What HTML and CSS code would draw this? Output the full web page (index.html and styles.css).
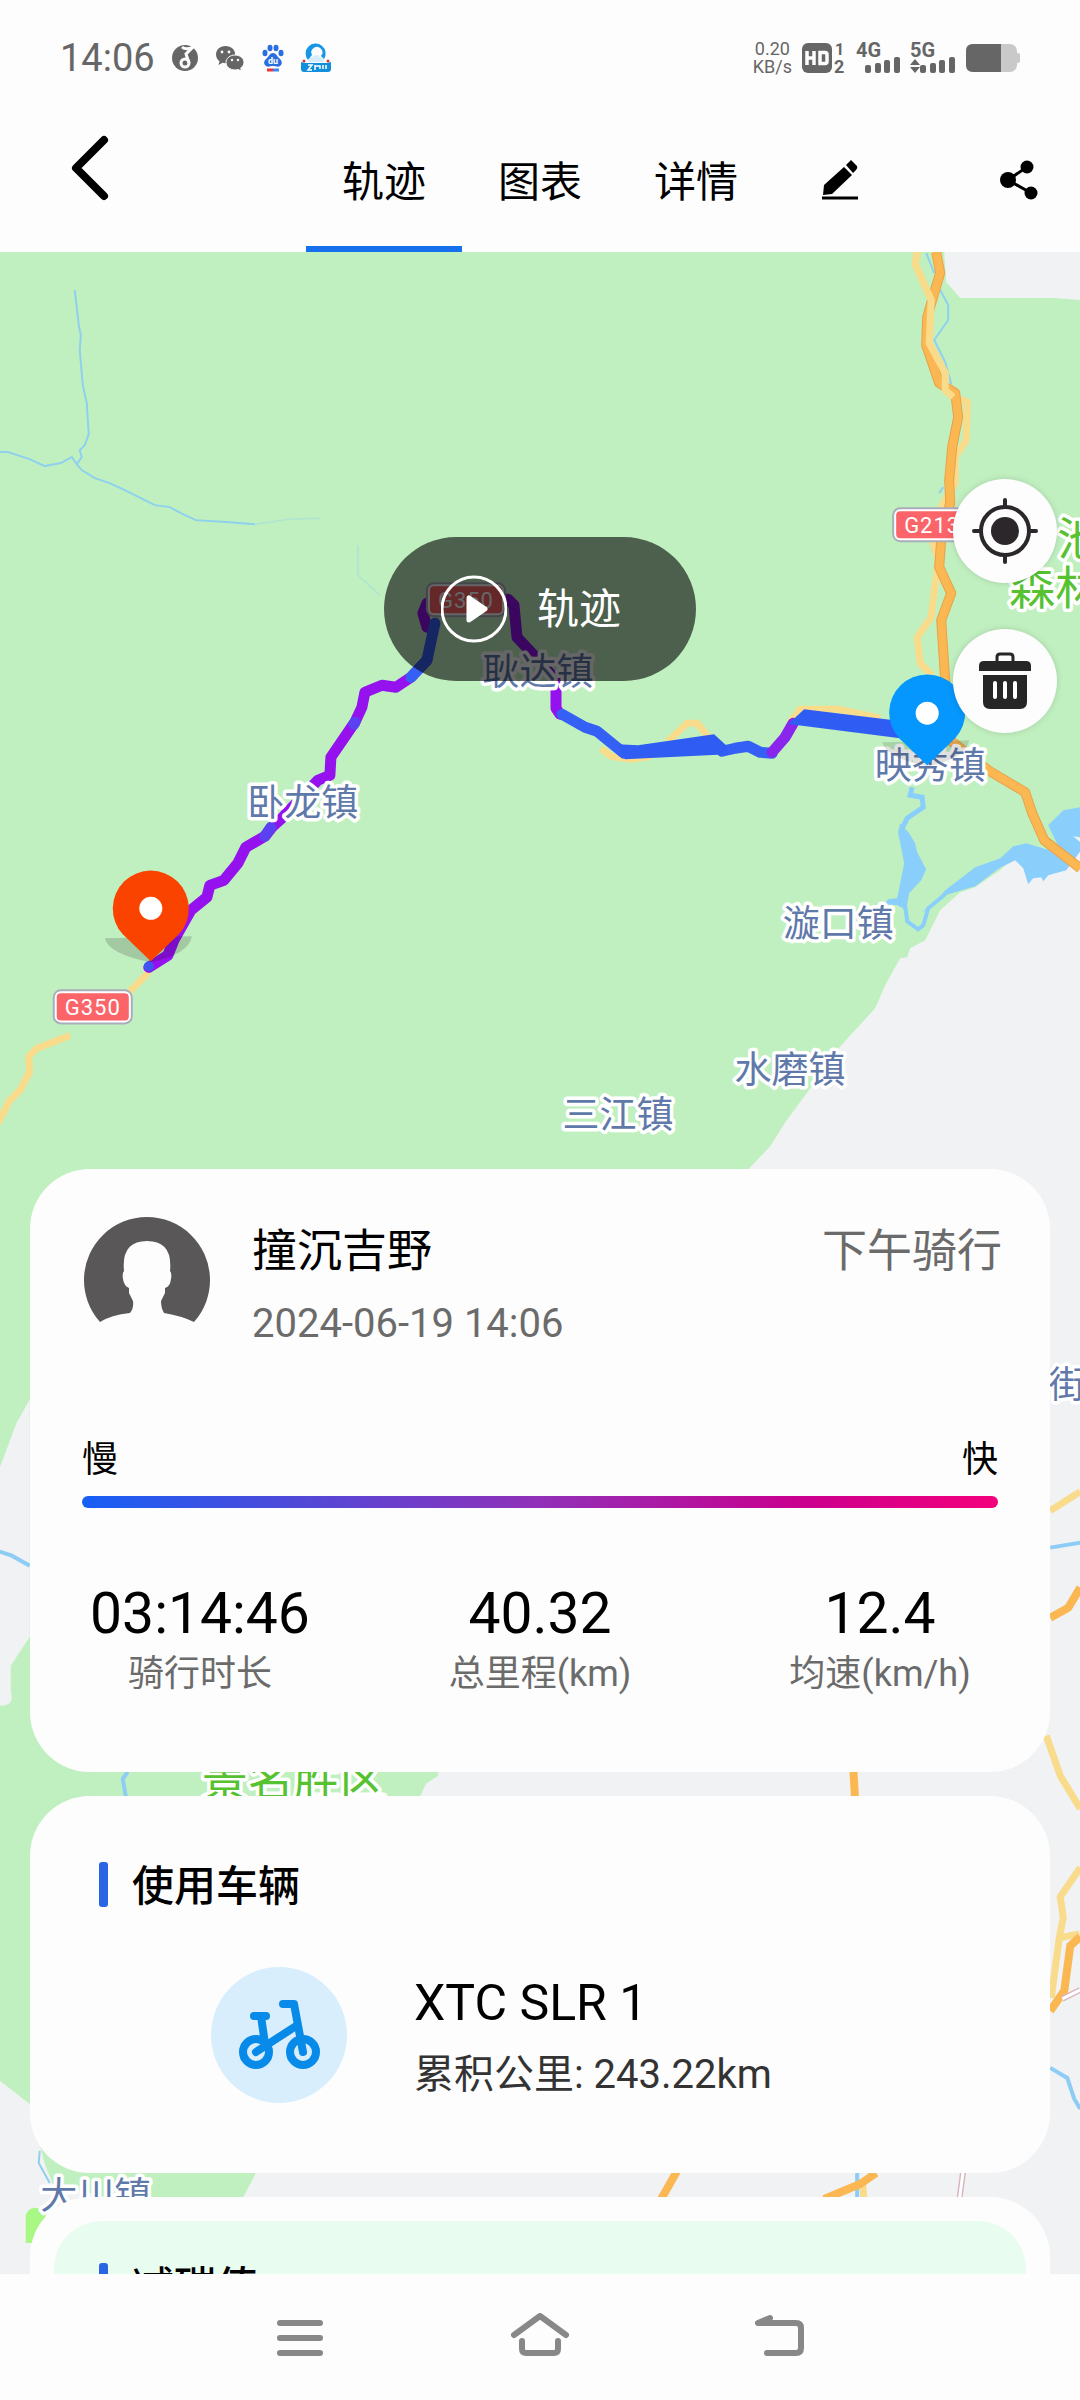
FILE: index.html
```
<!DOCTYPE html>
<html lang="zh-CN">
<head>
  <meta charset="UTF-8" />
  <meta name="viewport" content="width=device-width, initial-scale=1.0"/>
  <title>轨迹</title>
  <link rel="stylesheet" href="styles.css">
</head>
<body>
  <div class="status">
    <div class="status-left">
      <span class="clock">14:06</span>
      <svg width="26" height="28" viewBox="0 0 26 28">
        <circle cx="13" cy="14" r="13" fill="#666"/>
        <path d="M10 3q3 3 10 1l-6 6 3 9" fill="none" stroke="#fdfdfd" stroke-width="3"/>
        <circle cx="13" cy="19" r="4" fill="none" stroke="#fdfdfd" stroke-width="3"/>
      </svg>
      <svg width="30" height="26" viewBox="0 0 30 26">
        <path d="M10.500 1C4.700 1 1 5 1 9.500c0 3 1.500 5.200 3.500 6.700L3.500 20l4-2.200c1 .3 2 .4 3 .4 5.800 0 9.700-4 9.700-8.600S16.300 1 10.500 1z" fill="#666"/>
        <path d="M20 10c-5 0-9 3.200-9 7.500s4 7.500 9 7.500c1 0 2-.2 3-.5l3.500 1.500-.8-3c2-1.300 3.300-3.300 3.300-5.500 0-4.300-4-7.500-9-7.500z" fill="#666" stroke="#fdfdfd"/>
        <g fill="#fdfdfd">
          <circle cx="7" cy="7" r="1.400"/><circle cx="14" cy="7" r="1.400"/>
          <circle cx="17" cy="15" r="1.200"/><circle cx="23" cy="15" r="1.200"/>
        </g>
      </svg>
      <svg width="22" height="28" viewBox="0 0 22 28">
        <g fill="#2a6fe0">
          <ellipse cx="3" cy="9" rx="2.500" ry="3.200"/>
          <ellipse cx="8" cy="4" rx="2.500" ry="3.200"/>
          <ellipse cx="14" cy="4" rx="2.500" ry="3.200"/>
          <ellipse cx="19" cy="9" rx="2.500" ry="3.200"/>
          <path d="M11 9c-3 0-4 3-6 5s-4 4-2 7c2 3 5 1 8 1s6 2 8-1c2-3 0-5-2-7s-3-5-6-5z"/>
        </g>
        <text x="11" y="20" font-size="9" font-weight="700" fill="#fff" text-anchor="middle">du</text>
        <path d="M5 26h6" stroke="#e33" stroke-width="3"/>
        <path d="M11 26h6" stroke="#3b86f0" stroke-width="3"/>
      </svg>
      <svg width="30" height="30" viewBox="0 0 30 30">
        <path d="M7 17a10 10 0 1 1 16-1l-3-3a5.500 5.500 0 1 0-9-1z" fill="#1596e6"/>
        <path d="M7 19q0-4 4-5 4-4 8 0 4 1 4 5z" fill="#d6ecfa"/>
        <path d="M0 19l4 1h22l4-1v7q0 3-3 3H3q-3 0-3-3z" fill="#118fdc"/>
        <path d="M7 22h4l-4 5h4M14 22v5M14 23h5v3M22 22v4M25 22v4" fill="none" stroke="#fff" stroke-width="1.500"/>
        <circle cx="3" cy="18" r="1.500" fill="#d33"/><circle cx="27" cy="18" r="1.500" fill="#d33"/>
      </svg>
    </div>
    <div class="status-right">
      <div class="speed"><span>0.20</span><span>KB/s</span></div>
      <svg width="44" height="32" viewBox="0 0 44 32" fill="#666">
        <rect y="1" width="30" height="30" rx="6"/>
        <path d="M5 9v14M12 9v14M5 16h7M18 10.500h5q2 0 2 2v7q0 2-2 2h-5z" fill="none" stroke="#fdfdfd" stroke-width="3.500"/>
        <text x="33" y="13" font-size="16" font-weight="700">1</text>
        <text x="32" y="31" font-size="18" font-weight="700">2</text>
      </svg>
      <svg width="44" height="32" viewBox="0 0 44 32" fill="#666">
        <text x="0" y="15" font-size="20" font-weight="700">4G</text>
        <rect x="9" y="23" width="6" height="8" rx="2"/><rect x="19" y="21" width="6" height="10" rx="2"/>
        <rect x="28" y="18" width="6" height="13" rx="2"/><rect x="38" y="15" width="6" height="16" rx="2"/>
      </svg>
      <svg width="46" height="32" viewBox="0 0 46 32" fill="#666">
        <text x="0" y="15" font-size="20" font-weight="700">5G</text>
        <path d="M0 23l5-6 5 6zM0 25h10l-5 6z"/>
        <rect x="10" y="23" width="6" height="8" rx="2"/><rect x="20" y="21" width="6" height="10" rx="2"/>
        <rect x="29" y="18" width="6" height="13" rx="2"/><rect x="39" y="15" width="6" height="16" rx="2"/>
      </svg>
      <svg width="54" height="28" viewBox="0 0 54 28">
        <rect width="51" height="28" rx="7" fill="#c9c9c9"/>
        <rect x="50" y="9" width="4" height="10" rx="2" fill="#c9c9c9"/>
        <path d="M7 0h28v28H7q-7 0-7-7V7q0-7 7-7z" fill="#666"/>
      </svg>
    </div>
  </div>

  <header class="topbar">
    <button class="back" aria-label="返回">
      <svg width="38" height="66" viewBox="0 0 38 66"><path d="M33 5L5 33l28 28" fill="none" stroke="#000" stroke-width="8" stroke-linecap="round" stroke-linejoin="round"/></svg>
    </button>
    <nav class="tabs">
      <button class="tab active">轨迹</button>
      <button class="tab">图表</button>
      <button class="tab">详情</button>
    </nav>
    <button class="edit" aria-label="编辑">
      <svg width="36" height="40" viewBox="0 0 36 40">
        <path d="M1 35l1-10L22 7l8 8L10 34zM24 5l5-5 6 6q1 2-1 4l-3 3z"/>
        <path d="M0 38h36" stroke="#000" stroke-width="3"/>
      </svg>
    </button>
    <button class="share" aria-label="分享">
      <svg width="38" height="40" viewBox="0 0 38 40">
        <path d="M27 7L8 20l23 13" fill="none" stroke="#000" stroke-width="3"/>
        <circle cx="27" cy="7" r="6.500"/><circle cx="8" cy="20" r="8"/><circle cx="31" cy="33" r="6.500"/>
      </svg>
    </button>
  </header>

  <main class="page">
    <svg class="map" viewBox="0 252 1080 2021" preserveAspectRatio="xMidYMin slice">
      <rect y="252" width="1080" height="2021" fill="#c1f0c0"/>
      <!-- land outside the park -->
      <g fill="#f1f2f4">
        <path d="M944 252l2 30 14 16h95l25 2v-48z"/>
        <path d="M1080 845l-65 10-15 15-25 17-15 5-20 18-10 20-5 10-15 8-3 9-7 1-15 27-10 23-35 38-30 42-25 34-15 24-22 23L430 1500l10 263-2 12-12 8-6 13-120 150-45 228-12 23v76h837z"/>
        <path d="M30 1399l-13 23-17 45v238q12 0 12-8l-1-8v-24l19-29z"/>
        <path d="M0 2080l30 23 15 60 8 20 60 15v75H0z"/>
      </g>
      <path d="M26 2242v-28q2-6 8-7h14l-8 35z" fill="#a8f883"/>
      <!-- water -->
      <g fill="none" stroke="#8fd0ee" stroke-width="2">
        <path d="M75 290l4 35 2 10-1 15 3 35 4 18 1 17 1 14-4 11-5 5 2 7-5 7-5-7-11 6-16 3-15-7-22-7H0"/>
        <path d="M77 464l5 6 13 8 15 5 15 7 30 15 15 2 13 7 13 6 34 2 25 2"/>
        <path d="M255 524l35-5 30-1M358 545v30l22 20" opacity=".3"/>
        <path d="M926 253l8 20M940 290l8 15v15l-14 20 11 22 6 22M943 487l-4 6M931 545l2 8M40 2150l-1 12 11 20"/>
        <path d="M0 1551l12 4 18 10M1050 1547l30-5M1050 2067l17 10 7 21 6 10M128 1771l-5 7 3 18M857 2170v30" stroke-width="4" stroke="#8dcdf5"/>
      </g>
      <g fill="#8acffc">
        <path d="M900 823l9 10 6 10 2 9 9 17-5 11-12 13-4 22-2-7-6-3-13-1 4-5 9-1 7-35-6-30z"/>
        <path d="M930 908l15-18 30-23 25-9 13-12 13-3 20 6 14 1-12-25 15-15 17-3v44l-14 19-18 5-5 6-2-4-8 1-5 6-5-16-8-8-16 8-24 18-30 9-24 17z"/>
        <path d="M912 787l-2 8 12 2 1 10-16 11-7 14" fill="none" stroke="#8acffc" stroke-width="5"/>
        <path d="M905 905l2 16 11 8 5-4 5-17 17-14" fill="none" stroke="#8acffc" stroke-width="4"/>
      </g>
      <path d="M1073 836l7 1v5z" fill="#f1f2f4"/>
      <!-- roads -->
      <g fill="none" stroke-linejoin="round">
        <path class="road-minor" d="M917 252l-2 12 16 36-2 43 16 30v17l8 7 14 5-1 38-11 17v26l-14 24-9 33 6 20-7 57-14 20 3 26 12 12"/>
        <path class="road-minor" d="M149 972l-12 12-14 14-12 20M70 1035l-33 13-8 8 1 15-9 18-11 11-12 23M667 742l20-19h10l14 17M790 722l10-13h38l42 9M601 748l10 8 20 3 20-3"/>
        <path class="road-minor" d="M1050 1510l30-19M1046 1735l14 40 20 33M1080 1867l-20 29 3 21-4 20-8 60M1059 1937l20-4M862 2178l2 22"/>
        <path class="road-edge" d="M936 252l4 21-6 20-7 24-1 28 13 38 16 10 3 24-6 30-3 33 1 23-9 37-2 27 12 26-10 27 4 60 5 60 38 30 37 22 7 21 12 27 36 28"/>
        <path class="road" d="M936 252l4 21-6 20-7 24-1 28 13 38 16 10 3 24-6 30-3 33 1 23-9 37-2 27 12 26-10 27 4 60 5 60 38 30 37 22 7 21 12 27 36 28"/>
        <path class="road-minor" d="M917 252l-2 12 16 36-2 43 16 30v17l8 7"/>
        <path class="road" d="M1050 1617l18-10 12-20M1080 1936l-10 9-6 45-14 20M853 1765l2 35M677 2170l-17 30M876 2172l-16 11-36 15"/>
        <path d="M1062 1998l18-9M963 2170l-4 30" stroke="#d9b6bd" stroke-width="6"/>
        <path d="M1062 1998l18-9M963 2170l-4 30" stroke="#fff" stroke-width="3"/>
      </g>
      <!-- ride -->
      <g fill="none" stroke-width="11" stroke-linejoin="round" stroke-linecap="round">
        <path stroke="#9511ee" d="M149 967l19-12 6-15 17-30 16-13 3-12 14-5 14-17 8-16 19-11 7-9 10-9 36-38 12-5 1-18 24-35 7-15 3-15 17-7 14 2 15-10 16-17M427 627l-4-14 4-10 12-4h69l6 6 3 32 17 18 22 25v28l4 6"/>
        <path stroke="#3560f5" d="M411 677l16-17 8-37M562 714l23 13 12 4 27 22M722 751l13-3 13-2 12 6 12 1"/>
        <path stroke="#5a42f2" d="M265 836l6-9M354 724l1-2"/>
        <path stroke="#8a25ee" d="M772 752l13-15 8-14"/>
      </g>
      <path d="M618 744l20 1 76-11 12 11 2 9-103 5zM788 724l16-15 90 11 6 18-102-13z" fill="#2f5df4"/>
      <circle cx="149" cy="966" r="5" fill="#3f55f3"/>
      <!-- road shields -->
      <g class="shield">
        <rect x="54" y="990" width="78" height="33" rx="7"/><rect class="plate" x="57" y="993" width="72" height="27" rx="4"/>
        <text x="93" y="1015">G350</text>
        <rect x="893" y="508" width="78" height="33" rx="7"/><rect class="plate" x="896" y="511" width="72" height="27" rx="4"/>
        <text x="932" y="533">G213</text>
        <rect x="427" y="583" width="78" height="33" rx="7"/><rect class="plate" x="430" y="586" width="72" height="27" rx="4"/>
        <text x="466" y="608">G350</text>
      </g>
      <!-- place names -->
      <g class="place">
        <text x="303" y="816">卧龙镇</text>
        <text x="538" y="685">耿达镇</text>
        <text x="930" y="779">映秀镇</text>
        <text x="838" y="937">漩口镇</text>
        <text x="790" y="1083">水磨镇</text>
        <text x="618" y="1128">三江镇</text>
        <text x="1067" y="1397">街</text>
        <text x="96" y="2208">大川镇</text>
      </g>
      <g class="park">
        <text x="1057" y="555">池</text>
        <text x="1009" y="604">森林</text>
        <text x="202" y="1795">景名胜区</text>
      </g>
      <!-- start and end pins -->
      <g>
        <path d="M105 938q4 16 46 24 38-8 41-26z" fill="#000" opacity=".16"/>
        <path d="M151 961l-28-27a38 38 0 1 1 56 0z" fill="#fb4300"/>
        <circle cx="151" cy="908" r="11.500" fill="#fff"/>
      </g>
      <g>
        <path d="M882 742q4 16 46 24 38-8 41-26z" fill="#000" opacity=".12"/>
        <path d="M927 765l-28-27a38 38 0 1 1 56 0z" fill="#0597fd"/>
        <circle cx="927" cy="713" r="11.500" fill="#fff"/>
      </g>
    </svg>

    <button class="replay">
      <svg width="66" height="68" viewBox="0 0 66 68">
        <circle cx="33" cy="34" r="32" fill="none" stroke="#fff" stroke-width="3"/>
        <path d="M28 23v22l16-11z" fill="#fff" stroke="#fff" stroke-width="5" stroke-linejoin="round"/>
      </svg>
      <span>轨迹</span>
    </button>
    <div class="map-tools">
      <button class="tool" aria-label="定位">
        <svg width="66" height="66" viewBox="0 0 66 66">
          <circle cx="33" cy="33" r="14" fill="#2b272b"/>
          <circle cx="33" cy="33" r="24" fill="none" stroke="#2b272b" stroke-width="4"/>
          <path d="M33 2v7M33 57v7M2 33h7M57 33h7" stroke="#2b272b" stroke-width="4" stroke-linecap="round"/>
        </svg>
      </button>
      <button class="tool" aria-label="删除">
        <svg width="52" height="58" viewBox="0 0 52 58" fill="#262626">
          <path d="M18 9V5q0-3 3-3h10q3 0 3 3v4" fill="none" stroke="#262626" stroke-width="3"/>
          <path d="M5 9h42q5 0 5 5v5H0v-5q0-5 5-5z"/>
          <path d="M4 23h44v27q0 7-7 7H11q-7 0-7-7z"/>
          <path d="M16 31v14M26 31v14M36 31v14" stroke="#fff" stroke-width="4" stroke-linecap="round"/>
        </svg>
      </button>
    </div>

    <div class="sheet">
      <section class="card ride">
        <div class="rider">
          <svg width="126" height="106" viewBox="0 0 126 106">
            <path d="M16 101A63 63 0 1 1 110 101Q98 95 80 92Q77 87 77 80L81 72V67Q86 66 87 58Q88 52 86 50Q89 20 63 20Q37 20 40 50Q38 52 39 58Q40 65 45 67V72L49 80Q50 87 46 92Q27 94 16 101z" fill="#595757" transform="translate(0 4)"/>
          </svg>
          <div class="rider-text">
            <h2>撞沉吉野</h2>
            <time>2024-06-19 14:06</time>
          </div>
          <span class="ride-name">下午骑行</span>
        </div>
        <div class="scale">
          <div class="scale-labels"><span>慢</span><span>快</span></div>
          <div class="scale-bar"></div>
        </div>
        <ul class="stats">
          <li><b>03:14:46</b><span>骑行时长</span></li>
          <li><b>40.32</b><span>总里程(km)</span></li>
          <li><b>12.4</b><span>均速(km/h)</span></li>
        </ul>
      </section>

      <section class="card bike">
        <h3>使用车辆</h3>
        <div class="bike-row">
          <div class="bike-icon">
            <svg width="84" height="72" viewBox="0 0 84 72" fill="none" stroke="#078ae8" stroke-width="8" stroke-linecap="round" stroke-linejoin="round">
              <circle cx="19" cy="53" r="13"/><circle cx="66" cy="53" r="13"/>
              <path d="M66 53L57 5H46M17 17h12M24 17l4 28M19 53l40-26"/>
            </svg>
          </div>
          <div class="bike-text">
            <p class="bike-name">XTC SLR 1</p>
            <p class="bike-total">累积公里: 243.22km</p>
          </div>
        </div>
      </section>

      <section class="card carbon">
        <div class="carbon-inner">
          <h3>减碳值</h3>
        </div>
      </section>
    </div>
  </main>

  <footer class="navbar">
    <button aria-label="菜单">
      <svg width="56" height="48" viewBox="0 0 56 48"><path d="M8 10h40M8 25h40M8 40h40"/></svg>
    </button>
    <button aria-label="主页">
      <svg width="60" height="48" viewBox="0 0 60 48"><path d="M4 22L30 3l26 19M12 28v8q0 4 4 4h28q4 0 4-4v-8"/></svg>
    </button>
    <button aria-label="后退">
      <svg width="56" height="48" viewBox="0 0 56 48"><path d="M18 5L6 10h38q5 0 5 5v20q0 5-5 5H15"/></svg>
    </button>
  </footer>
</body>
</html>
```
FILE: styles.css
```
* {
  margin: 0;
  padding: 0;
  box-sizing: border-box;
}

body {
  font-family: Roboto, "Noto Sans CJK SC", sans-serif;
  background: #fdfdfd;
  color: #000;
  height: 100vh;
  display: flex;
  flex-direction: column;
  overflow: hidden;
}

button {
  border: 0;
  background: transparent;
  font: inherit;
  color: inherit;
  cursor: pointer;
}

svg {
  display: block;
  flex-shrink: 0;
}

/* status bar */
.status {
  height: 116px;
  flex-shrink: 0;
  display: flex;
  align-items: center;
  justify-content: space-between;
  padding: 0 60px;
  color: #666;
}

.status svg {
  overflow: visible;
}

.status-left,
.status-right {
  display: flex;
  align-items: center;
}

.status-left {
  gap: 17px;
}

.status-right {
  gap: 10px;
}

.clock {
  font-size: 38px;
}

.speed {
  display: flex;
  flex-direction: column;
  align-items: center;
  font-size: 18px;
  line-height: 18px;
}

/* top bar */
.topbar {
  height: 136px;
  flex-shrink: 0;
  display: flex;
  align-items: stretch;
}

.back {
  width: 306px;
  padding: 0 0 32px 71px;
}

.tabs {
  display: flex;
}

.tab {
  width: 156px;
  padding-bottom: 6px;
  font-size: 42px;
  border-bottom: 6px solid transparent;
}

.tab.active {
  border-color: #1670ec;
}

.edit {
  padding: 0 48px 8px;
}

.share {
  margin-left: auto;
  padding: 0 42px 8px;
}

/* map */
.page {
  flex: 1;
  min-height: 0;
  position: relative;
  overflow: hidden;
}

.map {
  position: absolute;
  top: 0;
  left: 0;
  width: 100%;
  height: 100%;
}

.road {
  stroke: #fbb752;
  stroke-width: 8;
}

.road-edge {
  stroke: #e8a24a;
  stroke-width: 10;
}

.road-minor {
  stroke: #f8dc8c;
  stroke-width: 7;
}

.shield rect {
  fill: #fff;
  stroke: #a9adbc;
  stroke-width: 2;
}

.shield .plate {
  fill: #fb6468;
  stroke: none;
}

.shield text {
  fill: #fff;
  font-size: 22px;
  letter-spacing: 1px;
  text-anchor: middle;
}

.place text,
.park text {
  stroke: #fff;
  stroke-width: 7;
  stroke-linejoin: round;
  paint-order: stroke;
}

.place text {
  font-size: 37px;
  fill: #5f79aa;
  text-anchor: middle;
}

.park text {
  font-size: 46px;
  fill: #56c22f;
}

.replay {
  position: absolute;
  top: 285px;
  left: 50%;
  transform: translateX(-50%);
  width: 312px;
  height: 144px;
  padding-right: 18px;
  border-radius: 72px;
  background: rgba(0, 0, 0, 0.6);
  color: #fff;
  font-size: 42px;
  display: flex;
  align-items: center;
  justify-content: center;
  gap: 30px;
}

.replay span {
  padding-bottom: 8px;
}

.map-tools {
  position: absolute;
  top: 227px;
  right: 23px;
  display: flex;
  flex-direction: column;
  gap: 46px;
}

.tool {
  width: 104px;
  height: 104px;
  border-radius: 50%;
  background: #fdfdfd;
  box-shadow: 0 0 6px rgba(0, 0, 0, 0.15);
  display: flex;
  align-items: center;
  justify-content: center;
}

/* cards */
.sheet {
  position: relative;
  padding: 917px 30px 0;
  display: flex;
  flex-direction: column;
  gap: 24px;
  pointer-events: none;
}

.card {
  background: #fdfdfd;
  border-radius: 60px;
  pointer-events: auto;
}

.ride {
  padding: 48px 0 74px;
}

.rider {
  display: flex;
  align-items: flex-start;
  gap: 42px;
  padding: 0 48px 0 54px;
}

.rider-text {
  flex: 1;
}

.rider h2,
.ride-name {
  font-size: 45px;
  font-weight: 400;
  line-height: 70px;
}

.rider time {
  display: block;
  margin-top: 9px;
  font-size: 40px;
  line-height: 56px;
  color: #6b6b6b;
}

.ride-name {
  color: #6b6b6b;
}

.scale {
  margin: 88px 52px 74px;
}

.scale-labels {
  display: flex;
  justify-content: space-between;
  font-size: 36px;
  line-height: 40px;
  margin-bottom: 16px;
}

.scale-bar {
  height: 12px;
  border-radius: 6px;
  background: linear-gradient(90deg, #175ff5, #9130b8 50%, #c9008f 78%, #f4007c);
}

.stats {
  list-style: none;
  display: flex;
}

.stats li {
  flex: 1;
  display: flex;
  flex-direction: column;
  align-items: center;
  gap: 4px;
}

.stats b {
  font-size: 57px;
  font-weight: 400;
  line-height: 64px;
}

.stats span {
  font-size: 36px;
  line-height: 48px;
  color: #6b6b6b;
}

.card h3 {
  display: flex;
  align-items: flex-start;
  gap: 24px;
  font-size: 42px;
  font-weight: 500;
  line-height: 50px;
}

.card h3:before {
  content: "";
  width: 9px;
  height: 45px;
  border-radius: 3px;
  background: #2a66e4;
}

.bike {
  padding: 66px 69px 70px;
}

.bike-row {
  display: flex;
  gap: 67px;
  margin: 55px 0 0 112px;
}

.bike-icon {
  width: 136px;
  height: 136px;
  border-radius: 50%;
  background: #d8eefd;
  display: flex;
  align-items: center;
  justify-content: center;
}

.bike-text {
  padding-top: 4px;
  display: flex;
  flex-direction: column;
  gap: 12px;
}

.bike-name {
  font-size: 50px;
  line-height: 64px;
}

.bike-total {
  font-size: 40px;
  line-height: 56px;
  color: #333;
}

.carbon {
  padding: 24px;
}

.carbon-inner {
  padding: 42px 45px;
  min-height: 200px;
  border-radius: 48px;
  background: #e8fcef;
}

/* system navigation */
.navbar {
  height: 126px;
  flex-shrink: 0;
  position: relative;
  background: #fdfdfd;
  display: flex;
  align-items: center;
  justify-content: center;
  gap: 180px;
}

.navbar button {
  width: 60px;
  display: flex;
  justify-content: center;
}

.navbar path {
  fill: none;
  stroke: #888;
  stroke-width: 6;
  stroke-linecap: round;
  stroke-linejoin: round;
}
```
